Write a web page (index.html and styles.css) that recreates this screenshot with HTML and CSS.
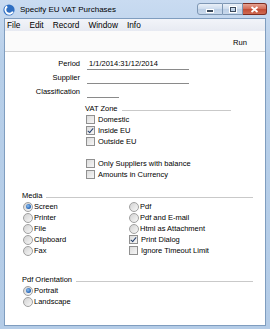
FILE: index.html
```html
<!DOCTYPE html>
<html lang="en">
<head>
    <meta charset="UTF-8">
    <title>Specify EU VAT Purchases</title>
    <link rel="stylesheet" href="styles.css">
</head>
<body>
    <div class="window">
        <div class="titlebar">
            <svg class="app-icon" width="12" height="12" viewBox="0 0 12 12">
                <circle cx="6" cy="6" r="5.6" fill="#2f6fc2"/>
                <path d="M4.2 2.4 A4 4 0 1 0 9.9 7.6" stroke="#fff" stroke-width="1.9" fill="none"/>
            </svg>
            <span class="title">Specify EU VAT Purchases</span>
            <div class="caption-buttons">
                <span class="cbtn min"><i></i></span>
                <span class="cbtn max"><i></i></span>
                <span class="cbtn close">
                    <svg width="9" height="7" viewBox="0 0 9 7">
                        <path d="M1.5 1 L7.5 6 M7.5 1 L1.5 6" stroke="#fff" stroke-width="1.8"/>
                    </svg>
                </span>
            </div>
        </div>

        <div class="client">
            <div class="menubar">
                <span>File</span>
                <span>Edit</span>
                <span>Record</span>
                <span>Window</span>
                <span>Info</span>
            </div>
            <div class="toolbar">
                <span class="run">Run</span>
            </div>

            <div class="form">
                <div class="field-row">
                    <span class="lbl">Period</span>
                    <span class="field wide">1/1/2014:31/12/2014</span>
                </div>
                <div class="field-row">
                    <span class="lbl">Supplier</span>
                    <span class="field wide"></span>
                </div>
                <div class="field-row">
                    <span class="lbl">Classification</span>
                    <span class="field short"></span>
                </div>

                <div class="group vat">
                    <div class="group-head"><span>VAT Zone</span><span class="rule"></span></div>
                    <div class="opt"><span class="cb"></span>Domestic</div>
                    <div class="opt"><span class="cb checked"></span>Inside EU</div>
                    <div class="opt"><span class="cb"></span>Outside EU</div>
                    <div class="opt"></div>
                    <div class="opt"><span class="cb"></span>Only Suppliers with balance</div>
                    <div class="opt"><span class="cb"></span>Amounts in Currency</div>
                </div>

                <div class="group media">
                    <div class="group-head"><span>Media</span><span class="rule"></span></div>
                    <div class="cols">
                        <div class="opt"><span class="rb on"></span>Screen</div>
                        <div class="opt"><span class="rb"></span>Pdf</div>
                        <div class="opt"><span class="rb"></span>Printer</div>
                        <div class="opt"><span class="rb"></span>Pdf and E-mail</div>
                        <div class="opt"><span class="rb"></span>File</div>
                        <div class="opt"><span class="rb"></span>Html as Attachment</div>
                        <div class="opt"><span class="rb"></span>Clipboard</div>
                        <div class="opt"><span class="cb checked"></span>Print Dialog</div>
                        <div class="opt"><span class="rb"></span>Fax</div>
                        <div class="opt"><span class="cb"></span>Ignore Timeout Limit</div>
                    </div>
                </div>

                <div class="group orient">
                    <div class="group-head"><span>Pdf Orientation</span><span class="rule"></span></div>
                    <div class="cols">
                        <div class="opt"><span class="rb on"></span>Portrait</div>
                        <div></div>
                        <div class="opt"><span class="rb"></span>Landscape</div>
                    </div>
                </div>
            </div>
        </div>
    </div>
</body>
</html>
```

FILE: styles.css
```css
body {
    margin: 0;
    font-family: "Liberation Sans", Arial, sans-serif;
    color: #000;
}
.window {
    width: 270px;
    height: 329px;
    box-sizing: border-box;
    padding: 0 4px 3px 4px;
    background: linear-gradient(#c9dbf1, #b7cfe9 60px, #b4cce7);
    display: flex;
    flex-direction: column;
}
.titlebar {
    height: 18px;
    display: flex;
    align-items: center;
    margin-left: -1px;
}
.app-icon {
    margin-right: 5px;
    margin-top: 1px;
}
.title {
    font-size: 8px;
    flex: 1;
    margin-top: 1px;
}
.caption-buttons {
    display: flex;
    align-self: flex-start;
    margin-top: 3px;
    margin-right: -1px;
}
.cbtn {
    height: 12px;
    box-sizing: border-box;
    display: flex;
    align-items: center;
    justify-content: center;
    border: 1px solid #7e97b4;
    background: linear-gradient(#e9f0f8, #cddcee 50%, #bccfe6 51%, #c9d9ec);
}
.cbtn.min {
    width: 26px;
    border-radius: 3px 0 0 3px;
}
.cbtn.min i {
    width: 6px;
    height: 2px;
    margin-top: 3px;
    background: #3b4a5c;
    box-shadow: 0 0 0 1px #fff;
}
.cbtn.max {
    width: 20px;
    border-left: none;
}
.cbtn.max i {
    width: 4px;
    height: 3px;
    border: 1px solid #3b4a5c;
    outline: 1px solid #fff;
}
.cbtn.close {
    width: 24px;
    border-left: none;
    border-color: #7d2d22;
    border-radius: 0 3px 3px 0;
    background: linear-gradient(#e5a292, #d36a55 50%, #c24b33 51%, #cf6a52);
}

.client {
    flex: 1;
    background: #fff;
    border: 1px solid #7f9dbf;
    display: flex;
    flex-direction: column;
}
.menubar {
    height: 12px;
    display: flex;
    align-items: center;
    gap: 9px;
    padding-left: 2px;
    font-size: 8.3px;
    background: linear-gradient(#f2f4f9, #e7eaf2);
}
.toolbar {
    height: 21px;
    display: flex;
    align-items: center;
    justify-content: flex-end;
    padding: 3px 18px 0 0;
    box-sizing: border-box;
    border-bottom: 1px solid #d4d4d4;
    background: #fbfbfb;
}
.run {
    font-size: 7.6px;
}

.form {
    padding-top: 5px;
    font-size: 7.5px;
}
.field-row {
    height: 14px;
    display: flex;
    line-height: 14px;
}
.lbl {
    width: 75px;
    text-align: right;
}
.field {
    margin-left: 7px;
    height: 12px;
    line-height: 13px;
    padding-left: 2px;
    box-sizing: content-box;
    border-bottom: 1px solid #8a8a8a;
}
.field.wide {
    width: 100px;
}
.field.short {
    width: 30px;
}

.group-head {
    height: 11px;
    display: flex;
    align-items: center;
}
.rule {
    flex: 1;
    height: 1px;
    margin: 3px 0 0 4px;
    background: #c9c9c9;
}
.opt {
    height: 11px;
    display: flex;
    align-items: center;
    white-space: nowrap;
}
.vat {
    margin: 4px 0 0 81px;
    width: 145px;
}
.vat .group-head {
    margin-left: -1px;
}
.media {
    margin: 10px 0 0 17px;
    width: 231px;
}
.orient {
    margin: 18px 0 0 17px;
    width: 231px;
}
.cols {
    display: grid;
    grid-template-columns: 106px 1fr;
    padding-left: 1px;
}

.cb {
    width: 9px;
    height: 9px;
    box-sizing: border-box;
    margin-right: 3px;
    border: 1px solid #909090;
    background: linear-gradient(135deg, #dcdcdc, #f6f6f6);
    position: relative;
}
.cb.checked::after {
    content: "";
    position: absolute;
    left: 2px;
    top: 0;
    width: 2px;
    height: 5px;
    border: solid #25406e;
    border-width: 0 1.5px 1.5px 0;
    transform: rotate(40deg);
}
.rb {
    width: 10px;
    height: 10px;
    box-sizing: border-box;
    margin-right: 1px;
    border-radius: 50%;
    border: 1px solid #a0a0a0;
    background: linear-gradient(135deg, #d2d2d2, #f8f8f8);
    position: relative;
}
.rb.on::after {
    content: "";
    position: absolute;
    left: 1.5px;
    top: 1.5px;
    width: 5px;
    height: 5px;
    border-radius: 50%;
    background: radial-gradient(circle at 40% 40%, #8fc0f0, #1f5fb4 70%);
}
```
